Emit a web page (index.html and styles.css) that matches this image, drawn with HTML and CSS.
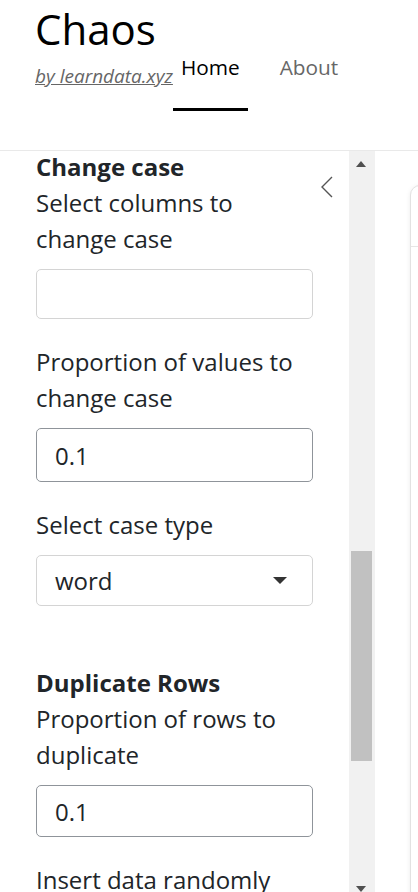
FILE: index.html
```html
<!DOCTYPE html>
<html lang="en">
<head>
<meta charset="utf-8">
<title>Chaos</title>
<link rel="stylesheet" href="styles.css">
</head>
<body>
<header class="navbar">
  <div class="brand">
    <div class="title">Chaos</div>
    <a class="byline">by learndata.xyz</a>
  </div>
  <nav class="tabs">
    <a class="tab active">Home</a>
    <a class="tab">About</a>
  </nav>
</header>
<div class="layout">
  <aside class="sidebar">
    <div class="sidebar-content">
      <h5 class="section-title">Change case</h5>
      <div class="field">
        <label>Select columns to change case</label>
        <div class="control selectize"></div>
      </div>
      <div class="field">
        <label>Proportion of values to change case</label>
        <input class="control number" type="text" value="0.1">
      </div>
      <div class="field">
        <label>Select case type</label>
        <div class="control select"><span>word</span><svg class="caret" width="14" height="7" viewBox="0 0 14 7"><polygon points="0,0 14,0 7,7" fill="#333"/></svg></div>
      </div>
      <h5 class="section-title spaced">Duplicate Rows</h5>
      <div class="field">
        <label>Proportion of rows to duplicate</label>
        <input class="control number tall" type="text" value="0.1">
      </div>
      <div class="field">
        <label>Insert data randomly</label>
      </div>
    </div>
    <button class="collapse" aria-label="Collapse sidebar"><svg width="12" height="22" viewBox="0 0 12 22"><polyline points="11,1 1,11 11,21" fill="none" stroke="#555" stroke-width="1.4"/></svg></button>
    <div class="scrollbar">
      <div class="arrow-up"></div>
      <div class="thumb"></div>
      <div class="arrow-down"></div>
    </div>
  </aside>
  <main class="main">
    <div class="card">
      <div class="card-header"></div>
      <div class="card-body"></div>
    </div>
  </main>
</div>
</body>
</html>
```
FILE: styles.css
```css
html, body {
  margin: 0;
  height: 892px;
  overflow: hidden;
  background: #fff;
}
body {
  font-family: "Open Sans", "DejaVu Sans", sans-serif;
  color: #212529;
}
.navbar {
  display: flex;
  align-items: flex-start;
  height: 150px;
  padding-left: 35px;
  border-bottom: 1px solid #e9e9e9;
}
.brand {
  display: flex;
  flex-direction: column;
}
.title {
  font-size: 42px;
  line-height: 57px;
  margin-top: 0;
  color: #000;
}
.byline {
  font-size: 19px;
  line-height: 28px;
  margin-top: 5px;
  font-style: italic;
  text-decoration: underline;
  color: #666;
}
.tabs {
  display: flex;
  gap: 24px;
  margin-top: 44px;
}
.tab {
  font-size: 20.8px;
  line-height: 31px;
  padding: 8px 8px 25px;
  border-bottom: 3px solid transparent;
  color: #676767;
}
.tab.active {
  color: #000;
  border-bottom-color: #000;
}
.layout {
  display: flex;
  height: 741px;
}
.sidebar {
  position: relative;
  display: flex;
  flex: none;
  width: 375px;
}
.sidebar-content {
  width: 349px;
  box-sizing: border-box;
  padding: 0 36px;
  overflow: hidden;
}
.section-title {
  font-size: 24px;
  line-height: 36px;
  font-weight: 700;
  margin: -2px 0 0;
}
.section-title.spaced {
  margin-top: 59px;
}
label {
  display: block;
  font-size: 24px;
  line-height: 36px;
  margin-bottom: 12px;
}
.field {
  margin-bottom: 25px;
}
.control {
  display: block;
  width: 277px;
  box-sizing: border-box;
  margin: 0;
  border-radius: 5px;
  border: 1px solid #d4d4d4;
  background: #fff;
  font-family: inherit;
  font-size: 24px;
  color: #212529;
  padding: 0 18px;
}
.selectize {
  height: 50px;
}
.number {
  height: 54px;
  border-color: #8f949a;
  outline: none;
}
.number.tall {
  height: 52px;
}
.select {
  height: 51px;
  display: flex;
  align-items: center;
  justify-content: space-between;
  padding-right: 25px;
}
.collapse {
  position: absolute;
  left: 321px;
  top: 25px;
  padding: 0;
  border: 0;
  background: none;
  width: 12px;
  height: 22px;
}
.collapse svg {
  display: block;
}
.scrollbar {
  width: 26px;
  background: #f1f1f1;
  display: flex;
  flex-direction: column;
}
.arrow-up {
  margin: 10px 0 0 7px;
  width: 0;
  height: 0;
  border-left: 5.5px solid transparent;
  border-right: 5.5px solid transparent;
  border-bottom: 6px solid #505050;
}
.thumb {
  margin: 384px 0 0 2px;
  width: 21px;
  height: 212px;
  background: #c1c1c1;
}
.arrow-down {
  margin: 125px 0 0 7px;
  width: 0;
  height: 0;
  border-left: 5.5px solid transparent;
  border-right: 5.5px solid transparent;
  border-top: 6px solid #505050;
}
.main {
  flex: 1;
  min-width: 0;
  padding: 34px 0 0 35px;
  overflow: hidden;
}
.card {
  width: 600px;
  height: 800px;
  border: 1px solid #e2e2e2;
  border-radius: 10px;
  box-shadow: 0 1px 5px rgba(0, 0, 0, 0.08);
  background: #fff;
}
.card-header {
  height: 60px;
  border-bottom: 1px solid #e6e6e6;
}
```
